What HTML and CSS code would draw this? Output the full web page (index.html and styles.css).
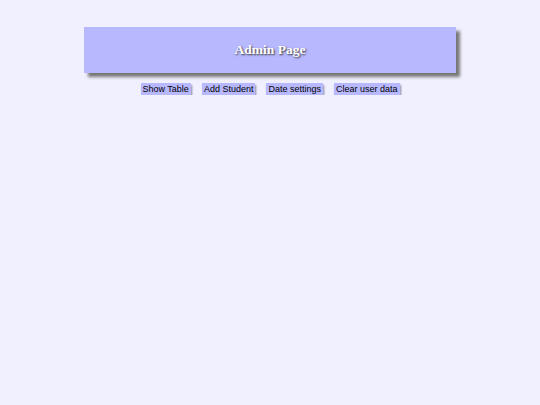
FILE: index.html
```html
<!DOCTYPE html>
<html>
<head>
<meta charset="utf-8">
<link rel="stylesheet" href="styles.css">
</head>
<body>
<div class="header"><h1 class="title">Admin Page</h1></div>
<div class="nav">
  <button class="btn">Show Table</button>
  <button class="btn">Add Student</button>
  <button class="btn">Date settings</button>
  <button class="btn">Clear user data</button>
</div>
</body>
</html>
```
FILE: styles.css
```css
html, body {
  margin: 0;
  padding: 0;
  background: #f0f0ff;
}
body {
  padding-top: 27px;
}
.header {
  width: 372px;
  height: 46px;
  margin: 0 auto;
  background: #b8b8ff;
  box-shadow: 4px 4px 3px #777;
  display: flex;
  align-items: center;
  justify-content: center;
}
.title {
  margin: 0;
  font-family: "Liberation Serif", serif;
  font-weight: bold;
  font-size: 13.5px;
  color: #fff;
  text-shadow: 1px 1px 2px #333;
}
.nav {
  display: flex;
  justify-content: center;
  gap: 11px;
  margin-top: 10px;
}
.btn {
  box-sizing: border-box;
  font-family: "Liberation Sans", Arial, sans-serif;
  font-size: 9px;
  line-height: 12px;
  height: 12px;
  padding: 0 2px;
  margin: 0;
  border: none;
  background: #b8b8ff;
  color: #000;
  box-shadow: 1px 2px 2px #8a8aa8;
}
```
